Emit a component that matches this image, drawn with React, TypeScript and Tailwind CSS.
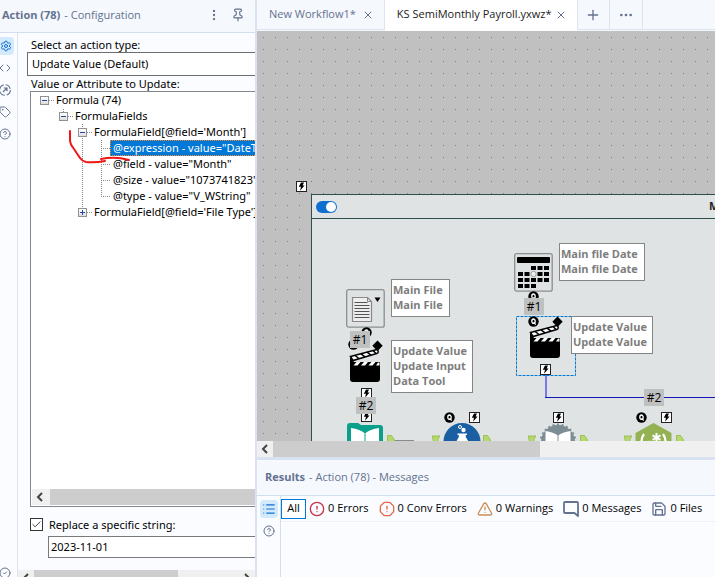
import React from "react";
import {
  ArrowUpRight,
  Check,
  CircleAlert,
  CircleCheck,
  CircleHelp,
  Code,
  EllipsisVertical,
  Ellipsis,
  List,
  OctagonAlert,
  Pin,
  Plus,
  Save,
  Settings,
  Tag,
  TriangleAlert,
  X,
} from "lucide-react";

function Bolt({ className }: { className: string }) {
  return (
    <svg viewBox="0 0 11 11" className={`absolute size-[11px] ${className}`} aria-hidden="true">
      <rect x="0.5" y="0.5" width="10" height="10" fill="#fff" stroke="#222" />
      <path d="M5 1.5h3L6.600 4.500h2L4 9.800l1-4H2.800z" fill="#000" />
    </svg>
  );
}

function QBadge({ className }: { className: string }) {
  return (
    <svg viewBox="0 0 11 11" className={`absolute size-[11px] ${className}`} aria-hidden="true">
      <circle cx="5.500" cy="5.500" r="5.200" fill="#000" />
      <ellipse cx="5.500" cy="5.200" rx="1.700" ry="2.200" fill="none" stroke="#fff" strokeWidth="1.300" />
      <path d="M5.500 6.300l2.200 2.200" stroke="#fff" strokeWidth="1.200" />
    </svg>
  );
}

function Clapper({ className }: { className: string }) {
  return (
    <svg viewBox="0 0 34 43" className={`absolute w-[34px] h-[43px] ${className}`} aria-hidden="true">
      <path d="M28.500 0.500l5.200 5.200-5.200 5.200-5.200-5.200z" fill="#000" />
      <path d="M1.500 16.500L27 9.800q2-.3 2.200 1.500.2 1.700-1.500 2.200L4 20.500z" fill="#fff" stroke="#000" strokeWidth="1.500" />
      <path d="M6 15.500l4 3M12 13.800l4 3M18 12.200l4 3M24 10.500l3 3" stroke="#000" strokeWidth="1.500" />
      <path d="M1 17v22q0 3 3 3h24q3 0 3-3V22H5z" fill="#000" />
      <path d="M4.500 25.500l3-3.500h4l-3 3.500zM12 25.500l3-3.500h4l-3 3.500zM19.500 25.500l3-3.500h4l-3 3.500zM27 25.500l2-3h1.500v3z" fill="#fff" />
    </svg>
  );
}

function Step({ className, children }: { className: string; children: string }) {
  return (
    <span className={`absolute flex h-[17px] w-5 items-center justify-center bg-[#bfc1c1] text-xs text-black ${className}`}>
      {children}
    </span>
  );
}

function Note({ className, lines }: { className: string; lines: string[] }) {
  return (
    <div className={`absolute whitespace-nowrap border border-[#858585] bg-white pl-px pb-1 pt-0.5 text-[11px] font-bold leading-[15px] text-[#7d7d7d] ${className}`}>
      {lines.map((l, i) => (
        <div key={i}>{l}</div>
      ))}
    </div>
  );
}

function Anchors({ className }: { className: string }) {
  return (
    <svg viewBox="0 0 8 8" className={`absolute size-2 ${className}`} aria-hidden="true">
      <path d="M0 1h8L6 4v4H2z" fill="#b5d96a" stroke="#92b848" strokeWidth="0.800" />
    </svg>
  );
}

function OutAnchor({ className }: { className: string }) {
  return (
    <svg viewBox="0 0 8 8" className={`absolute size-2 ${className}`} aria-hidden="true">
      <path d="M0.500 0.500h4L7.500 5v3h-7z" fill="#b5d96a" stroke="#92b848" strokeWidth="0.800" />
    </svg>
  );
}

const teeth = Array.from({ length: 24 }, (_, i) => i * 15);

function Canvas() {
  return (
    <div className="relative min-h-0 flex-1 overflow-hidden bg-[#c0c0c0]">
      <svg className="absolute inset-0 size-full" aria-hidden="true">
        <defs>
          <pattern id="grid" width="12" height="12" patternUnits="userSpaceOnUse">
            <rect x="6" y="6" width="1" height="1" fill="#7c7c7c" />
          </pattern>
        </defs>
        <rect width="100%" height="100%" fill="url(#grid)" />
      </svg>
      <section className="absolute -right-40 -bottom-40 left-[54px] top-[163px] border border-[#2f4f4f] bg-[#e2e7e7]/90">
        <div className="flex h-6 items-center justify-between border-b border-[#2f4f4f] pl-1">
          <label className="relative flex">
            <input type="checkbox" role="switch" defaultChecked aria-label="Enable container" className="peer h-3 w-[21px] appearance-none rounded-full bg-[#0f6fd1]" />
            <span className="pointer-events-none absolute right-px top-px size-2.5 rounded-full bg-white" />
          </label>
        </div>
      </section>
      <h2 className="absolute left-[452px] top-[167px] text-[11px] font-bold leading-4 text-[#222]">Main</h2>

      <svg className="absolute inset-0 size-full" aria-hidden="true">
        <path d="M289 344v22" stroke="#7a7ae6" strokeWidth="2" />
        <path d="M288 366.500H1400" stroke="#1414b8" />
        <path d="M137 409.500h20" stroke="#8a8a8a" />
        <rect x="259.500" y="285.500" width="59" height="59" fill="none" stroke="#0078d7" strokeDasharray="3 1" />
      </svg>

      <Bolt className="left-[39px] top-[150px]" />

      <svg viewBox="0 0 39 39" className="absolute left-[89px] top-[258px] size-[39px]" aria-hidden="true">
        <rect x="0.700" y="0.700" width="37.500" height="37.500" rx="2" fill="#dfe2e2" stroke="#8b8f8f" strokeWidth="1.300" />
        <path d="M6.500 8.500h15l4 4v20h-19z" fill="#eee" stroke="#888" strokeWidth="1.200" />
        <path d="M8.500 13.500h13M8.500 16.500h15M8.500 19.500h15M8.500 22.500h15M8.500 25.500h15M8.500 28.500h15" stroke="#555" />
        <path d="M21.500 8.500v4h4" fill="none" stroke="#888" />
        <path d="M28.500 8.500h6L31.500 13z" fill="#000" />
      </svg>
      <Note className="left-[134px] top-[248px] w-[59px]" lines={["Main File", "Main File"]} />
      <QBadge className="left-[104px] top-[296px]" />
      <QBadge className="left-[91px] top-[308px]" />
      <Clapper className="left-[92px] top-[309px]" />
      <Step className="left-[93px] top-[300px]">#1</Step>
      <Note className="left-[134px] top-[309px] w-[82px]" lines={["Update Value", "Update Input", "Data Tool"]} />
      <Bolt className="left-[104px] top-[357px]" />
      <Bolt className="left-[104px] top-[380px]" />
      <Step className="left-[99px] top-[366px]">#2</Step>

      <svg viewBox="0 0 36 36" className="absolute left-[90px] top-[392px] size-9" aria-hidden="true">
        <path d="M0 3q0-3 3-3h8l3 2h19q3 0 3 3v31H0z" fill="#0aa08c" />
        <path d="M4 5q9 1 14 5.500Q23 6 32 5v24q-9 1-14 5Q13 30 4 29z" fill="#fff" />
        <path d="M18 10.500v24" stroke="#0aa08c" />
      </svg>
      <OutAnchor className="left-[130px] top-[404px]" />

      <Anchors className="left-[175px] top-[404px]" />
      <svg viewBox="0 0 38 38" className="absolute left-[186px] top-[392px] size-[38px]" aria-hidden="true">
        <circle cx="19" cy="18.500" r="18.500" fill="#1b5fa3" />
        <path d="M14.500 10.500h9.500v1.500h-1.200v2L32 30H7l8.800-16v-2h-1.300z" fill="#fff" />
        <circle cx="17" cy="4" r="1.500" fill="none" stroke="#fff" />
        <circle cx="20.500" cy="7" r="2.200" fill="#fff" />
      </svg>
      <OutAnchor className="left-[226px] top-[404px]" />
      <QBadge className="left-[187px] top-[381px]" />
      <Bolt className="left-[212px] top-[381px]" />

      <Anchors className="left-[271px] top-[404px]" />
      <svg viewBox="0 0 38 38" className="absolute left-[282px] top-[392px] size-[38px]" aria-hidden="true">
        <circle cx="19" cy="19" r="17" fill="#7d8d94" />
        {teeth.map((a) => (
          <path key={a} d="M17.500 3l.8-2.500h1.400l.8 2.500z" fill="#7d8d94" transform={`rotate(${a} 19 19)`} />
        ))}
        <path d="M6.500 8q8 1 12.500 4.500Q23.500 9 31.500 8v20H6.500z" fill="#fff" />
        <path d="M19 12v18" stroke="#7d8d94" />
      </svg>
      <OutAnchor className="left-[323px] top-[404px]" />
      <Bolt className="left-[296px] top-[381px]" />

      <Anchors className="left-[367px] top-[404px]" />
      <svg viewBox="0 0 38 42" className="absolute left-[378px] top-[392px] h-[42px] w-[38px]" aria-hidden="true">
        <path d="M18.500 0L36.500 10v22l-18 10L.5 32V10z" fill="#94b154" />
        <path d="M9 11q-5 7 0 17M28 11q5 7 0 17" fill="none" stroke="#fff" strokeWidth="2.200" />
        <path d="M21.500 10v9M17.500 12.300l8 4.500M25.500 12.300l-8 4.500" stroke="#fff" strokeWidth="2" />
        <circle cx="14" cy="19" r="1.300" fill="#fff" />
      </svg>
      <OutAnchor className="left-[419px] top-[404px]" />
      <QBadge className="left-[379px] top-[381px]" />
      <Bolt className="left-[404px] top-[381px]" />

      <svg viewBox="0 0 39 39" className="absolute left-[257px] top-[222px] size-[39px]" aria-hidden="true">
        <rect x="0.700" y="0.700" width="37.500" height="37.500" rx="2" fill="#dfe2e2" stroke="#8b8f8f" strokeWidth="1.300" />
        <rect x="3" y="4" width="33" height="6" rx="1" fill="#000" />
        <path d="M17 13h5v4h-5zM23.500 13h5v4h-5zM30 13h5v4h-5zM4 19h5v4H4zM10.500 19h5v4h-5zM23.500 19h5v4h-5zM30 19h5v4h-5zM4 25h5v4H4zM10.500 25h5v4h-5zM17 25h5v4h-5zM23.500 25h5v4h-5zM30 25h5v4h-5zM4 31h5v4H4zM10.500 31h5v4h-5zM17 31h5v4h-5z" fill="#000" />
        <circle cx="19.500" cy="21" r="2.700" fill="#eee" stroke="#888" strokeWidth="0.800" />
      </svg>
      <Note className="left-[302px] top-[212px] w-[86px]" lines={["Main file Date", "Main file Date"]} />
      <QBadge className="left-[271px] top-[260px]" />
      <Step className="left-[267px] top-[267px]">#1</Step>
      <Clapper className="left-[272px] top-[285px]" />
      <QBadge className="left-[271px] top-[285px]" />
      <Note className="left-[314px] top-[285px] w-[82px]" lines={["Update Value", "Update Value"]} />
      <Bolt className="left-[283px] top-[333px]" />
      <Step className="left-[387px] top-[358px]">#2</Step>
    </div>
  );
}

type Row = { depth: number; text: string; open?: "minus" | "plus"; selected?: boolean };

const rows: Row[] = [
  { depth: 0, text: "Formula (74)", open: "minus" },
  { depth: 1, text: "FormulaFields", open: "minus" },
  { depth: 2, text: "FormulaField[@field='Month']", open: "minus" },
  { depth: 3, text: '@expression - value="DateT', selected: true },
  { depth: 3, text: '@field - value="Month"' },
  { depth: 3, text: '@size - value="1073741823"' },
  { depth: 3, text: '@type - value="V_WString"' },
  { depth: 2, text: "FormulaField[@field='File Type']", open: "plus" },
];

const indent = ["pl-[9px]", "pl-[28px]", "pl-[47px]", "pl-[66px]"];

function Tree() {
  return (
    <div className="relative flex-1 overflow-hidden">
      <svg className="absolute left-0 top-0 h-36 w-24" aria-hidden="true">
        <g stroke="#8a8a8a" strokeDasharray="1 1" fill="none">
          <path d="M18 8.500h5M37 24.500h5M56 40.500h5M32.500 17v3M51.500 32v4M51.500 46v70M70.500 48v57M70 56.500h9M70 72.500h9M70 88.500h9M70 104.500h9M56 120.500h5" />
        </g>
      </svg>
      <ul role="tree" aria-label="Value or Attribute to Update" className="relative">
        {rows.map((r) => (
          <li key={r.text} role="treeitem" aria-selected={!!r.selected} className={`flex h-4 items-center ${indent[r.depth]}`}>
            {r.open ? (
              <button aria-label="Toggle branch" className="mr-[6px] flex size-[9px] shrink-0 items-center justify-center border border-[#919191] bg-gradient-to-b from-white to-[#dedede]">
                <svg viewBox="0 0 7 7" className="size-[7px]" aria-hidden="true">
                  <path d={r.open === "minus" ? "M1 3.500h5" : "M1 3.500h5M3.500 1v5"} stroke="#28459c" />
                </svg>
              </button>
            ) : (
              <span className="w-[13px] shrink-0" />
            )}
            <span
              className={
                r.selected
                  ? "flex h-4 flex-1 items-center whitespace-nowrap border border-dotted border-[#ff8728] bg-[#0078d7] pl-[2px] text-white"
                  : r.open
                    ? "whitespace-nowrap pl-px"
                    : "whitespace-nowrap pl-[3px]"
              }
            >
              {r.text}
            </span>
          </li>
        ))}
      </ul>
      <svg viewBox="0 0 64 36" className="pointer-events-none absolute left-[37px] top-[37px] h-9 w-16" aria-hidden="true">
        <path d="M2 2v9q0 4 4 9l6 9q2 3 6 4 9 1 19-1M33 30q14-3 28 1" fill="none" stroke="#f01515" strokeWidth="2" strokeLinecap="round" />
      </svg>
    </div>
  );
}

function Arrow({ d }: { d: string }) {
  return (
    <svg viewBox="0 0 16 16" className="size-4 shrink-0" aria-hidden="true">
      <path d={d} fill="none" stroke="#444" strokeWidth="2" />
    </svg>
  );
}
const LEFT = "M10 4L6 8l4 4";
const RIGHT = "M6 4l4 4-4 4";

function ConfigPanel() {
  return (
    <aside className="flex w-[257px] shrink-0 flex-col border-r-2 border-[#d9e2f1] bg-[#fafcff]">
      <header className="flex h-[33px] shrink-0 items-center border-b border-[#d3ddf0] bg-[#f5f8fd] pb-0.5 pl-0.5 pr-2.5 text-[#64728f]">
        <h1 className="flex-1 whitespace-nowrap text-[11px]">
          <b>Action (78)</b>
          <span className="pl-1">- Configuration</span>
        </h1>
        <button aria-label="More options" className="mr-2.5">
          <EllipsisVertical className="size-3.5" />
        </button>
        <button aria-label="Pin panel">
          <Pin className="size-[14px]" />
        </button>
      </header>
      <div className="flex min-h-0 flex-1">
        <nav className="flex w-[18px] shrink-0 flex-col items-start border-r border-[#dbe3f2] pt-1 text-[#64728f]">
          <button aria-label="Configuration" className="mb-0.5 flex h-[18px] w-3.5 items-center justify-end rounded-r bg-[#d3eafd] pr-0.5 text-[#0f6fd1]">
            <Settings className="size-3 shrink-0" />
          </button>
          <button aria-label="XML view" className="-ml-px flex h-[22px] items-center"><Code className="size-3" /></button>
          <button aria-label="Navigation" className="-ml-px flex h-[22px] items-center">
            <svg viewBox="0 0 12 12" className="size-3" fill="none" stroke="currentColor" aria-hidden="true">
              <circle cx="6" cy="6" r="5.300" strokeDasharray="6.300 2" strokeWidth="1.100" />
              <path d="M4 8l4-4M4.800 4H8v3.200" strokeWidth="1.200" />
            </svg>
          </button>
          <button aria-label="Annotation" className="-ml-px flex h-[22px] items-center"><Tag className="size-3" /></button>
          <button aria-label="Help" className="-ml-px flex h-[22px] items-center"><CircleHelp className="size-3" /></button>
          <button aria-label="Status" className="-ml-px mt-auto -mb-0.5 flex"><CircleCheck className="size-3" /></button>
        </nav>
        <div className="flex min-w-0 flex-1 flex-col overflow-hidden font-['Noto_Sans','Open_Sans',sans-serif] text-[11px] text-black">
          <label htmlFor="action-type" className="mt-1 pl-[13px] leading-[15px]">Select an action type:</label>
          <select id="action-type" className="ml-[9px] h-6 w-[280px] shrink-0 appearance-none border border-[#6d6d6d] bg-white pl-1">
            <option>Update Value (Default)</option>
          </select>
          <p className="pl-[13px] leading-[15px]">Value or Attribute to Update:</p>
          <div className="ml-3 flex min-h-0 w-[280px] flex-1 flex-col border border-[#828790] bg-white">
            <Tree />
            <div className="m-px flex h-4 shrink-0 items-center bg-[#cdcdcd]">
              <span className="flex h-4 w-[18px] items-center bg-[#f0f0f0]"><Arrow d={LEFT} /></span>
            </div>
          </div>
          <div className="ml-3 mt-2.5 flex items-center gap-1.5">
            <span className="relative flex">
              <input id="replace" type="checkbox" defaultChecked className="size-[13px] appearance-none border border-[#333] bg-white" />
              <Check className="pointer-events-none absolute left-px top-px size-[11px] text-[#333]" />
            </span>
            <label htmlFor="replace">Replace a specific string:</label>
          </div>
          <input aria-label="Replacement string" defaultValue="2023-11-01" className="ml-[30px] mt-[3px] h-[22px] w-[260px] shrink-0 border border-[#7a7a7a] bg-white pl-0.5 pb-0.5" />
          <div className="mt-3 flex h-[7px] shrink-0 items-start justify-between overflow-hidden bg-[#f0f0f0]">
            <Arrow d={LEFT} />
            <span className="mr-auto h-4 w-36 bg-[#cdcdcd]" />
            <Arrow d={RIGHT} />
          </div>
        </div>
      </div>
    </aside>
  );
}

function Filter({ icon, children }: { icon: React.ReactNode; children: string }) {
  return (
    <button className="flex items-center gap-[3px] whitespace-nowrap">
      {icon}
      {children}
    </button>
  );
}

export default function App() {
  return (
    <div className="flex h-screen overflow-hidden font-['Open_Sans','Noto_Sans',sans-serif]">
      <ConfigPanel />
      <main className="flex min-w-0 flex-1 flex-col">
        <div className="flex h-[31px] shrink-0 bg-[#f5f8fd] pb-px text-[11px] text-[#64728f]">
          <div className="flex items-center gap-1.5 border-b border-r border-[#dbe5f2] pl-3 pr-2.5">
            <a href="#new" className="whitespace-nowrap">New Workflow1*</a>
            <button aria-label="Close New Workflow1"><X className="size-3" /></button>
          </div>
          <div className="-mb-px flex items-center gap-[3px] bg-white pb-0.5 pl-3 pr-2.5">
            <a href="#payroll" className="whitespace-nowrap text-[#222]">KS SemiMonthly Payroll.yxwz*</a>
            <button aria-label="Close KS SemiMonthly Payroll"><X className="size-3" /></button>
          </div>
          <button aria-label="New tab" className="flex w-[33px] items-center justify-center border-x border-b border-[#dbe5f2]"><Plus className="size-4" /></button>
          <button aria-label="More tabs" className="flex w-[33px] items-center justify-center border-b border-r border-[#dbe5f2]"><Ellipsis className="size-4" /></button>
          <div className="flex-1 border-b border-[#dbe5f2]" />
        </div>
        <Canvas />
        <div className="flex h-4 shrink-0 items-center bg-[#f0f0f0]">
          <Arrow d={LEFT} />
          <span className="h-4 w-7/12 bg-[#cdcdcd]" />
        </div>
        <section className="flex h-[120px] shrink-0 flex-col border-t-[3px] border-[#d9e2f1] bg-[#fafcff]">
          <header className="flex h-9 shrink-0 items-center border-b border-[#d3ddf0] bg-[#f5f8fd] pl-2 text-[11px] text-[#64728f]">
            <h2><b>Results</b><span className="pl-1">- Action (78) - Messages</span></h2>
          </header>
          <div className="flex flex-1">
            <nav className="flex w-6 flex-col items-center gap-1 border-r border-[#d3ddf0] pt-1 text-[#64728f]">
              <button aria-label="Messages list" className="flex size-[18px] items-center justify-center rounded-sm bg-[#d3eafd] text-[#0f6fd1]"><List className="size-3.5" /></button>
              <button aria-label="Help" className="flex size-[18px] items-center justify-center"><CircleHelp className="size-3" /></button>
            </nav>
            <div className="min-w-0 flex-1">
              <div className="flex h-[26px] items-center gap-2.5 border-b border-[#edf0f6] text-[11px] text-black">
                <div className="flex items-center gap-[3px]">
                  <button className="h-5 w-[25px] border border-[#0078d7] bg-white">All</button>
                  <Filter icon={<CircleAlert className="size-4 text-[#c8324a]" />}>0 Errors</Filter>
                </div>
                <Filter icon={<OctagonAlert className="size-4 text-[#e8684a]" />}>0 Conv Errors</Filter>
                <Filter icon={<TriangleAlert className="size-4 text-[#c98f5a]" />}>0 Warnings</Filter>
                <Filter
                  icon={
                    <svg viewBox="0 0 16 16" className="size-4" aria-hidden="true">
                      <path d="M15 15l-3.500-3H2q-1 0-1-1V2q0-1 1-1h12q1 0 1 1z" fill="none" stroke="#64728f" strokeWidth="1.800" strokeLinejoin="round" />
                    </svg>
                  }
                >
                  0 Messages
                </Filter>
                <Filter icon={<Save className="size-4 text-[#64728f]" />}>0 Files</Filter>
              </div>
            </div>
          </div>
        </section>
      </main>
    </div>
  );
}
